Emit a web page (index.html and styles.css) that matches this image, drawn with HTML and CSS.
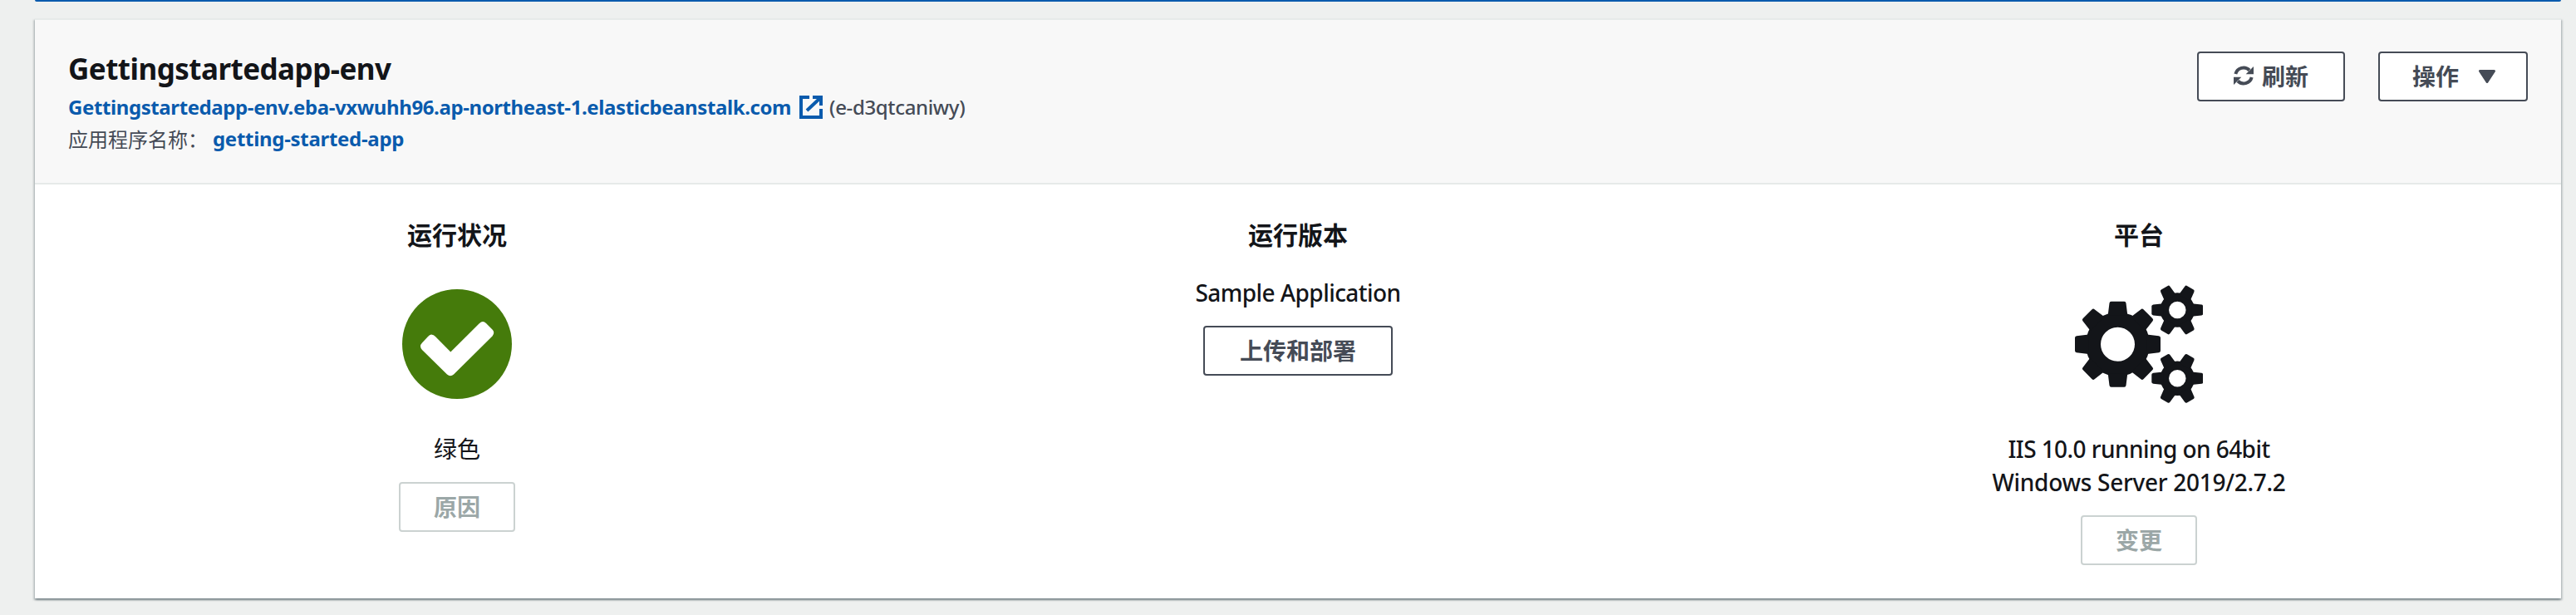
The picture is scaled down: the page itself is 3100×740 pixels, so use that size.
FILE: index.html
```html
<!DOCTYPE html>
<html lang="zh-CN">
<head>
<meta charset="utf-8">
<title>Gettingstartedapp-env</title>
<link rel="stylesheet" href="styles.css">
</head>
<body>
<div class="banner"></div>
<main class="card">
  <header class="card-header">
    <div class="summary">
      <h1 class="title"><span>Gettingstartedapp-env</span></h1>
      <div class="line">
        <a class="link url">Gettingstartedapp-env.eba-vxwuhh96.ap-northeast-1.elasticbeanstalk.com</a>
        <svg class="external" viewBox="0 0 28 28"><path d="M12 2H2V26H26V16M16 2H26V12M25 3L9 18" fill="none" stroke="currentColor" stroke-width="4"/></svg>
        <span class="env-id">(e-d3qtcaniwy)</span>
      </div>
      <div class="line">
        <span class="label">应用程序名称：</span>
        <a class="link app">getting-started-app</a>
      </div>
    </div>
    <div class="actions">
      <button class="btn refresh">
        <svg class="refresh-icon" viewBox="0 0 24 24"><g fill="none" stroke="currentColor" stroke-width="4"><path d="M2.300 10A10 10 0 0 1 19 5.500"/><path d="M21.700 14A10 10 0 0 1 5 18.500"/></g><path d="M24 1V10.300H14.700ZM0 23V13.700H9.300Z" fill="currentColor"/></svg>
        <span>刷新</span>
      </button>
      <button class="btn menu">
        <span>操作</span>
        <svg class="caret" viewBox="0 0 20 16"><path d="M1.500 1.500H18.500L10 14.500Z" fill="currentColor" stroke="currentColor" stroke-width="3" stroke-linejoin="round"/></svg>
      </button>
    </div>
  </header>
  <section class="columns">
    <div class="column">
      <h2 class="heading">运行状况</h2>
      <svg class="status" viewBox="0 0 132 132"><circle cx="66" cy="66" r="66" fill="#457b0b"/><path d="M35 54.500Q38 54.500 40 57L58.300 75.500L93 41Q97 37 101 41L108.500 48.500Q112 52 108.500 56.500L62 102.500Q58 106 54 102.500L24 73Q20 68.500 24 64.500L31 57Q33 54.500 35 54.500Z" fill="#fff"/></svg>
      <p class="value health">绿色</p>
      <button class="btn narrow" disabled>原因</button>
    </div>
    <div class="column">
      <h2 class="heading">运行版本</h2>
      <p class="value version"><span>Sample Application</span></p>
      <button class="btn deploy">上传和部署</button>
    </div>
    <div class="column">
      <h2 class="heading">平台</h2>
      <svg class="gears" viewBox="0 0 154 142">
        <defs>
          <path id="tooth" d="M-11.800-35L-10-49.500Q-9.800-51.500-7.800-51.500H7.800Q9.800-51.500 10-49.500L11.800-35Z"/>
          <path id="cog-tooth" d="M17-7.800L29-6.500Q31-6.200 31-4.500V4.500Q31 6.200 29 6.500L17 7.800Z"/>
          <g id="cog">
            <circle r="15.500" fill="none" stroke="currentColor" stroke-width="10.500"/>
            <use href="#cog-tooth"/><use href="#cog-tooth" transform="rotate(60)"/><use href="#cog-tooth" transform="rotate(120)"/>
            <use href="#cog-tooth" transform="rotate(180)"/><use href="#cog-tooth" transform="rotate(240)"/><use href="#cog-tooth" transform="rotate(300)"/>
          </g>
        </defs>
        <g fill="currentColor">
          <g transform="translate(51.500 71.200)">
            <circle r="29.500" fill="none" stroke="currentColor" stroke-width="18"/>
            <use href="#tooth"/><use href="#tooth" transform="rotate(45)"/><use href="#tooth" transform="rotate(90)"/><use href="#tooth" transform="rotate(135)"/>
            <use href="#tooth" transform="rotate(180)"/><use href="#tooth" transform="rotate(225)"/><use href="#tooth" transform="rotate(270)"/><use href="#tooth" transform="rotate(315)"/>
          </g>
          <use href="#cog" transform="translate(123.300 30)"/>
          <use href="#cog" transform="translate(123.300 112.300)"/>
        </g>
      </svg>
      <p class="value platform"><span class="p1">IIS 10.0 running on 64bit</span><br><span class="p2">Windows Server 2019/2.7.2</span></p>
      <button class="btn narrow" disabled>变更</button>
    </div>
  </section>
</main>
</body>
</html>
```
FILE: styles.css
```css
* { box-sizing: border-box; }
body {
  margin: 0;
  height: 740px;
  overflow: hidden;
  background: #eef0ef;
  color: #131519;
  font-family: "Noto Sans", "Noto Sans CJK SC", sans-serif;
}
h1, h2, p { margin: 0; }
.banner {
  height: 2px;
  margin: 0 18px 20px 42px;
  background: #0a5bad;
  border-radius: 0 0 2px 2px;
}
.card {
  height: 698px;
  margin: 0 18px 0 42px;
  background: #fff;
  border-top: 2px solid #e6eae9;
  box-shadow: 0 2px 2px rgba(0, 28, 36, .3), 2px 2px 2px rgba(0, 28, 36, .15), -2px 2px 2px rgba(0, 28, 36, .15);
}
.card-header {
  display: flex;
  justify-content: space-between;
  height: 198px;
  padding: 38px 40px 0 40px;
  background: #f8f8f8;
  border-bottom: 2px solid #e6eae9;
}
.title {
  height: 48px;
  line-height: 42px;
  font-size: 35px;
  font-weight: 700;
  letter-spacing: -.53px;
  white-space: nowrap;
}
.line {
  display: flex;
  align-items: center;
  height: 38px;
  font-size: 24px;
  line-height: 38px;
  color: #454b56;
  white-space: nowrap;
}
.link { color: #0a5bad; font-weight: 700; }
.url { width: 869px; letter-spacing: -.4px; }
.external { width: 28px; height: 28px; margin: 0 8px 0 11px; color: #0a5bad; }
.env-id { font-weight: 500; letter-spacing: -.35px; }
.label { width: 174px; font-family: "Noto Sans CJK SC", sans-serif; }
.app { letter-spacing: -.3px; }
.actions { display: flex; gap: 40px; }
.btn {
  display: flex;
  align-items: center;
  justify-content: center;
  height: 60px;
  padding: 0 0 2px;
  border: 2px solid #454b56;
  border-radius: 4px;
  background: #fff;
  color: #454b56;
  font: 700 28px/40px "Noto Sans CJK SC", sans-serif;
}
.btn:disabled { color: #9ba7a7; border-color: #cbd2d1; }
.refresh { width: 178px; gap: 10px; }
.refresh-icon { width: 24px; height: 24px; }
.menu { width: 180px; gap: 24px; padding-left: 2px; }
.caret { width: 20px; height: 16px; margin-top: 2px; }
.narrow { width: 140px; }
.deploy { width: 228px; }
.columns {
  display: grid;
  grid-template-columns: repeat(3, 1012px);
  padding: 37px 0 0 2px;
}
.column { display: flex; flex-direction: column; align-items: center; }
.heading { height: 67px; font: 700 30px/44px "Noto Sans CJK SC", sans-serif; }
.status { width: 132px; height: 132px; margin: 22px 0 40px; }
.value { height: 60px; font-size: 28px; font-weight: 500; line-height: 40px; text-align: center; white-space: nowrap; }
.health { font-weight: 400; }
.version { height: 66px; padding-top: 6px; letter-spacing: -.55px; }
.gears { width: 154px; height: 142px; margin: 17px 0 35px; }
.platform { height: 100px; }
.p1 { letter-spacing: -.57px; }
.p2 { letter-spacing: -.29px; }
```
